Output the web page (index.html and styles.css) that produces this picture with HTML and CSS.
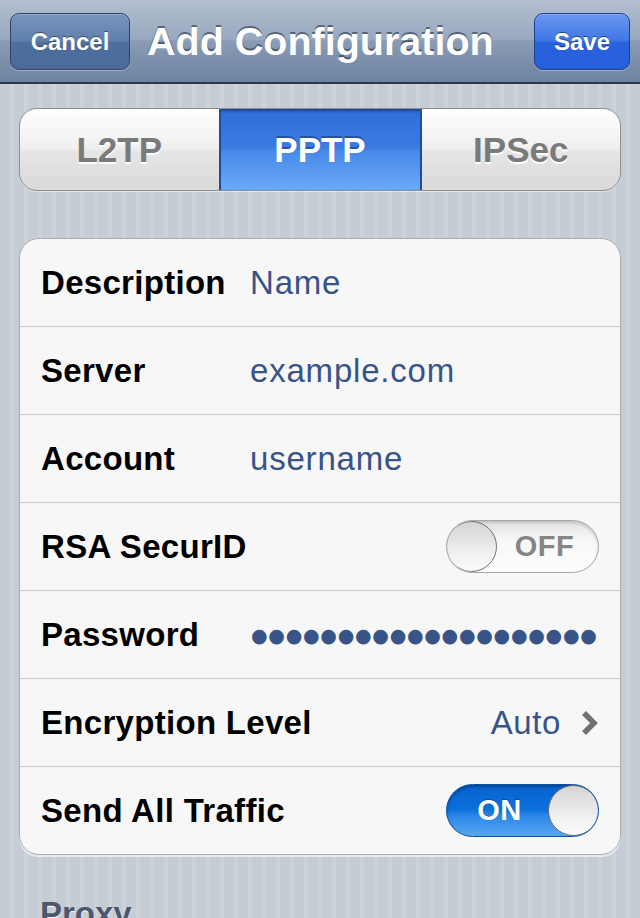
FILE: index.html
```html
<!DOCTYPE html>
<html>
<head>
<meta charset="utf-8">
<link rel="stylesheet" href="styles.css">
</head>
<body>
<div class="navbar">
  <button class="nav-btn cancel">Cancel</button>
  <div class="nav-title">Add Configuration</div>
  <button class="nav-btn save">Save</button>
</div>
<div class="content">
  <div class="segmented">
    <div class="seg">L2TP</div>
    <div class="seg selected">PPTP</div>
    <div class="seg">IPSec</div>
  </div>
  <div class="group">
    <div class="row"><span class="label">Description</span><span class="value">Name</span></div>
    <div class="row"><span class="label">Server</span><span class="value">example.com</span></div>
    <div class="row"><span class="label">Account</span><span class="value">username</span></div>
    <div class="row"><span class="label">RSA SecurID</span>
      <div class="switch off"><span class="knob"></span><span class="switch-text">OFF</span></div>
    </div>
    <div class="row"><span class="label">Password</span><span class="value dots">●●●●●●●●●●●●●●●●●●●●</span></div>
    <div class="row"><span class="label">Encryption Level</span>
      <span class="detail">Auto<svg class="chev" width="18" height="26" viewBox="0 0 18 26"><polyline points="3,3 13,13 3,23" fill="none" stroke="#717171" stroke-width="5.5"/></svg></span>
    </div>
    <div class="row"><span class="label">Send All Traffic</span>
      <div class="switch on"><span class="switch-text">ON</span><span class="knob"></span></div>
    </div>
  </div>
  <div class="section-header">Proxy</div>
</div>
</body>
</html>
```
FILE: styles.css
```css
html, body {
  margin: 0;
  padding: 0;
}
body {
  width: 640px;
  height: 918px;
  overflow: hidden;
  font-family: "Liberation Sans", Arial, sans-serif;
  background-color: #c5ccd4;
  background-image: repeating-linear-gradient(90deg, #c5ccd4 0 10px, #cbd2d9 10px 14px);
}
.navbar {
  height: 82px;
  border-bottom: 2px solid #2d3642;
  background: linear-gradient(#b3bfcf 0%, #97a8bf 48%, #8a9cb5 50%, #6d83a1 100%);
  display: flex;
  align-items: center;
  padding: 0 10px;
  box-sizing: content-box;
}
.nav-btn {
  height: 57px;
  border-radius: 9px;
  border: 1.5px solid #2f4466;
  color: #fff;
  font-family: "Liberation Sans", Arial, sans-serif;
  font-weight: bold;
  font-size: 24px;
  text-shadow: 0 -1.5px 0 rgba(0,0,0,0.45);
  box-shadow: 0 1px 0 rgba(255,255,255,0.35), inset 0 1px 0 rgba(255,255,255,0.2);
  padding: 0;
  margin-top: 1px;
}
.cancel {
  width: 120px;
  background: linear-gradient(#7995bd 0%, #5f7fac 48%, #4f6f9f 52%, #4a6a9b 100%);
}
.save {
  width: 96px;
  margin-left: auto;
  background: linear-gradient(#6c97f1 0%, #3f77e6 48%, #2a62dc 52%, #255fdc 100%);
  border-color: #1f3f88;
}
.nav-title {
  margin-left: 17px;
  color: #fff;
  font-weight: bold;
  font-size: 39.5px;
  text-shadow: 0 -2px 0 rgba(40,50,70,0.6);
  white-space: nowrap;
}
.content {
  padding: 24px 19px 0;
}
.segmented {
  display: flex;
  height: 83px;
  border-radius: 18px;
  border: 1px solid #8e8e8e;
  box-sizing: border-box;
  overflow: hidden;
  background: linear-gradient(#fdfdfd 0%, #f0f0f0 48%, #e6e6e6 52%, #d9d9d9 100%);
  box-shadow: 0 1px 0 rgba(255,255,255,0.5);
}
.seg {
  flex: 1;
  display: flex;
  align-items: center;
  justify-content: center;
  font-weight: bold;
  font-size: 35px;
  color: #7a7a7a;
  text-shadow: 0 2px 0 #fff;
}
.seg.selected {
  color: #fff;
  text-shadow: 0 -2px 0 rgba(20,50,110,0.55);
  background: linear-gradient(#2f6cd7 0%, #3b7ce2 48%, #4689e8 52%, #6ca9f9 100%);
  box-shadow: inset 2px 0 0 #1f4c9c, inset -2px 0 0 #1f4c9c, inset 0 2px 3px rgba(10,40,100,0.6);
  flex: 0 0 203px;
}
.group {
  margin-top: 47px;
  background: #f7f7f7;
  border: 1px solid #a9abae;
  border-radius: 20px;
  box-shadow: 0 2px 0 rgba(255,255,255,0.6);
  overflow: hidden;
}
.row {
  height: 87px;
  display: flex;
  align-items: center;
  padding: 0 21px;
  box-sizing: content-box;
}
.row + .row {
  border-top: 1px solid #cbcbcb;
}
.label {
  font-weight: bold;
  font-size: 33px;
  color: #000;
  letter-spacing: 0.3px;
  min-width: 209px;
  white-space: nowrap;
}
.value {
  font-size: 33px;
  color: #385487;
  letter-spacing: 0.8px;
}
.dots {
  font-family: "DejaVu Sans", sans-serif;
  font-size: 19px;
  letter-spacing: 0.75px;
  margin-left: 1px;
  white-space: nowrap;
}
.detail {
  margin-left: auto;
  font-size: 33px;
  letter-spacing: 0.6px;
  color: #385487;
  display: flex;
  align-items: center;
  gap: 20px;
}
.chev {
  display: block;
}
.switch {
  margin-left: auto;
  width: 153px;
  height: 53px;
  border-radius: 27px;
  box-sizing: border-box;
  display: flex;
  align-items: center;
  overflow: hidden;
}
.switch.off {
  border: 1px solid #a6a6a6;
  background: linear-gradient(#e2e2e2 0%, #f8f8f8 40%, #fdfdfd 100%);
  box-shadow: inset 0 2px 3px rgba(0,0,0,0.15);
}
.switch.on {
  border: 1px solid #0b4fa6;
  background: linear-gradient(#0762d0 0%, #0c6fdc 48%, #2a86e6 60%, #58a8f0 100%);
  box-shadow: inset 0 2px 3px rgba(0,0,0,0.3);
}
.knob {
  width: 51px;
  height: 51px;
  border-radius: 50%;
  box-sizing: border-box;
  border: 1.5px solid #6f6f6f;
  background: linear-gradient(#d4d4d4, #f3f3f3 70%, #fafafa);
  flex: 0 0 auto;
}
.switch.off .knob { margin-left: -1px; }
.switch.on .knob { margin-right: -1px; }
.switch-text {
  flex: 1;
  text-align: center;
  font-weight: bold;
  font-size: 29px;
  letter-spacing: 0.5px;
}
.switch.off .switch-text {
  color: #858585;
  text-shadow: 0 1px 0 #fff;
  padding-right: 6px;
}
.switch.on .switch-text {
  color: #fff;
  text-shadow: 0 -1px 0 rgba(0,0,0,0.3);
  padding-left: 4px;
}
.section-header {
  margin-top: 40px;
  padding-left: 21px;
  font-weight: bold;
  font-size: 33px;
  color: #4c566c;
  text-shadow: 0 1px 0 #fff;
}
```
